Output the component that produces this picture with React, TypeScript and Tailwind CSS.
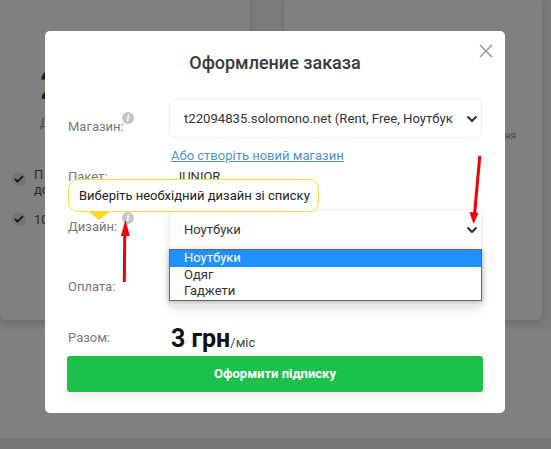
import React from "react";

function Info({ className = "" }: { className?: string }) {
  return (
    <span className={"absolute flex h-[12px] w-[12px] items-center justify-center rounded-full bg-[#c4c4c4] text-[10px] font-bold italic leading-none text-white " + className} style={{ fontFamily: '"Liberation Serif", serif' }}>
      i
    </span>
  );
}

function Chevron() {
  return (
    <svg width="12" height="8" viewBox="0 0 12 8" className="shrink-0">
      <path d="M1.5 1.5 6 6l4.5-4.5" fill="none" stroke="#333" strokeWidth="2.2" />
    </svg>
  );
}

function Check() {
  return (
    <span className="flex h-[14px] w-[14px] shrink-0 items-center justify-center rounded-full bg-[#747474]">
      <svg width="10" height="8" viewBox="0 0 10 8">
        <path d="M1 4l2.6 2.6L9 1.2" fill="none" stroke="#151515" strokeWidth="1.8" />
      </svg>
    </span>
  );
}

export default function App() {
  return (
    <div className="relative h-[449px] w-[551px] overflow-hidden bg-[#7b7b7b] text-[#333]" style={{ fontFamily: 'Roboto, "Noto Sans", sans-serif' }}>
      {/* page behind the backdrop */}
      <div className="flex h-[320px] gap-[34px] pr-[9px]">
        <div className="h-full w-[250px] rounded-b-[6px] bg-[#808080] pl-[40px] pt-[66px] shadow-[0_2px_6px_rgba(0,0,0,0.15)]">
          <div className="text-[40px] font-bold leading-[40px] text-[#231a10]">2</div>
          <div className="mt-[10px] text-[12px] leading-[14px] text-[#4a4a4a]">Д</div>
          <div className="-ml-[28px] mt-[42px] flex gap-[8px]">
            <Check />
            <div className="-mt-[5px] text-[13px] leading-[15px] text-[#1f2d2a]">П<br />до</div>
          </div>
          <div className="-ml-[28px] mt-[15px] flex gap-[8px]">
            <Check />
            <div className="text-[13px] leading-[15px] text-[#3a1e1e]">10</div>
          </div>
        </div>
        <div className="flex h-full flex-1 justify-end rounded-b-[6px] bg-[#808080] pr-[26px] pt-[130px] shadow-[0_2px_6px_rgba(0,0,0,0.15)]">
          <span className="text-[10px] leading-[12px] text-[#4a4a4a]">ня</span>
        </div>
      </div>
      <div className="mt-[9px] h-[109px] bg-[#808080]" />
      <div className="h-[11px] bg-[#777]" />

      {/* modal */}
      <div className="absolute left-[45px] top-[31px] h-[382px] w-[460px] rounded-[5px] bg-white">
        <svg width="14" height="14" viewBox="0 0 14 14" className="absolute right-[12px] top-[13px]">
          <path d="M1 1l12 12M13 1 1 13" stroke="#999" strokeWidth="1.5" fill="none" />
        </svg>
        <div className="pt-[21px] text-center text-[18px] font-medium leading-[22px] text-[#3a3a3a]">Оформление заказа</div>

        <div className="mt-[25px] flex pl-[23px]">
          <div className="relative w-[101px] pt-[19px] text-[13px] leading-[17px] text-[#777]">
            Магазин:
            <Info className="left-[54px] top-[13px]" />
          </div>
          <div className="flex h-[39px] w-[313px] items-center justify-between rounded-[5px] border border-[#eee] pl-[14px] pr-[3px] text-[13.15px] text-[#333]">
            <span className="whitespace-nowrap">t22094835.solomono.net (Rent, Free, Ноутбук</span>
            <Chevron />
          </div>
        </div>

        <div className="mt-[9px] pl-[126px] text-[13px] font-normal leading-[17px] text-[#4f94c8] underline">Або створіть новий магазин</div>

        <div className="relative mt-[4px] flex h-[44px] pl-[23px] text-[13px] leading-[17px]">
          <div className="w-[107px] text-[#777]">Пакет:</div>
          <div className="text-[#333]">JUNIOR</div>
        </div>

        <div className="relative -mt-[3px] flex pl-[23px]">
          <div className="relative w-[101px] pt-[9px] text-[13px] leading-[17px] text-[#777]">
            Дизайн:
            <Info className="left-[54px] top-[3px]" />
          </div>
          <div className="relative h-[98px] w-[313px] rounded-[5px] border border-[#eee] shadow-[0_4px_10px_rgba(0,0,0,0.08)]">
            <div className="flex h-[39px] items-center justify-between pl-[14px] pr-[3px] text-[13px] text-[#333]">
              <span>Ноутбуки</span>
              <Chevron />
            </div>
            <div className="absolute -left-px top-[39px] w-[313px] border border-[#666] bg-white text-[13px] leading-[16.5px] text-[#333] shadow-[0_2px_6px_rgba(0,0,0,0.3)]">
              <div className="bg-[#1e90ff] pl-[14px] text-white">Ноутбуки</div>
              <div className="pl-[14px]">Одяг</div>
              <div className="pl-[14px]">Гаджети</div>
            </div>
          </div>
          <div className="absolute left-[23px] top-[69px] text-[13px] leading-[17px] text-[#777]">Оплата:</div>
        </div>

        <div className="mt-[16px] flex items-end pl-[23px]">
          <div className="w-[103px] pb-[13px] text-[13px] leading-[17px] text-[#777]">Разом:</div>
          <div className="text-[25px] font-bold leading-[32px] text-[#111]">
            3 грн<span className="text-[13px] font-normal text-[#444]">/міс</span>
          </div>
        </div>

        <div className="mx-[22px] -mt-[3px] flex h-[36px] items-center justify-center rounded-[3px] bg-[#1cc14c] text-[13px] font-bold text-white shadow-[0_4px_10px_rgba(0,0,0,0.08)]">
          Оформити підписку
        </div>
      </div>

      {/* tooltip */}
      <div className="absolute left-[68px] top-[179px] flex h-[33px] w-[251px] items-center whitespace-nowrap rounded-[10px] border border-[#f6dc3c] bg-white pl-[10px] text-[13px] text-[#222]">
        Виберіть необхідний дизайн зі списку
      </div>
      <div className="absolute left-[89px] top-[212px] h-0 w-0 border-x-[10px] border-t-[8px] border-x-transparent border-t-[#f9d71c]" />

      {/* annotation arrows */}
      <svg width="551" height="449" viewBox="0 0 551 449" className="pointer-events-none absolute left-0 top-0">
        <path d="M124.3 282 124.8 232" stroke="#f00000" strokeWidth="3" fill="none" />
        <path d="M125.5 220 120.8 236h9z" fill="#f00000" />
        <path d="M479.8 156 474.5 215" stroke="#f00000" strokeWidth="3" fill="none" />
        <path d="M473.5 224 469.5 212 478.5 213z" fill="#f00000" />
      </svg>
    </div>
  );
}
